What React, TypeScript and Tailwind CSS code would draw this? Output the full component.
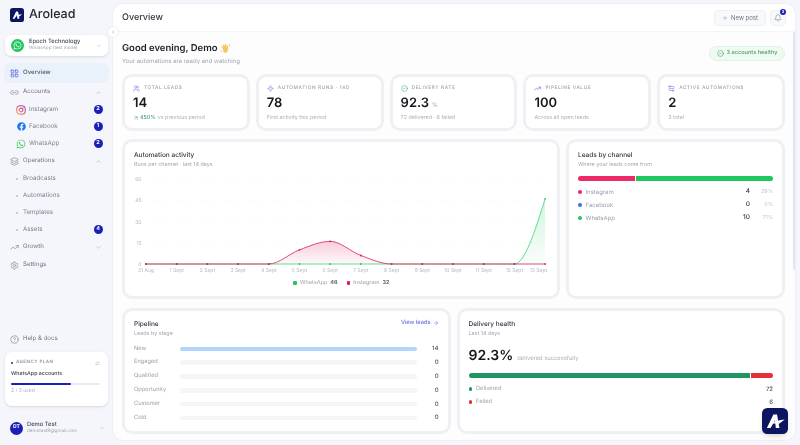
import {
  ArrowRight,
  ArrowRightLeft,
  ArrowUpRight,
  Bell,
  ChevronDown,
  ChevronLeft,
  ChevronUp,
  CircleCheck,
  CircleHelp,
  Layers,
  LayoutGrid,
  Link2,
  Plus,
  Route,
  Settings,
  Sparkle,
  TrendingUp,
  Users,
} from 'lucide-react';
import { FaFacebook, FaWhatsapp } from 'react-icons/fa';
import type { ReactNode } from 'react';

const days = ['31 Aug', '1 Sept', '2 Sept', '3 Sept', '4 Sept', '5 Sept', '6 Sept', '7 Sept', '8 Sept', '9 Sept', '10 Sept', '11 Sept', '12 Sept', '13 Sept'];
const instagram = [0, 0, 0, 0, 0, 10, 16, 6, 0, 0, 0, 0, 0, 0];
const whatsapp = [0, 0, 0, 0, 0, 0, 0, 0, 0, 0, 0, 0, 0, 46];

const stages = [
  { name: 'New', value: 14 },
  { name: 'Engaged', value: 0 },
  { name: 'Qualified', value: 0 },
  { name: 'Opportunity', value: 0 },
  { name: 'Customer', value: 0 },
  { name: 'Cold', value: 0 },
];

function Logo({ size }: { size: number }) {
  return (
    <svg width={size} height={size} viewBox="0 0 32 32" className="shrink-0">
      <rect width="32" height="32" rx="6.5" fill="#0b1560" />
      <path d="M6 24.5 L14 8 H18.5 L21.5 24.5 H17 L16 15.5 L10.5 24.5 Z" fill="#fff" />
      <path d="M10 19.5 C15 16.5 21 14.5 28 14 L21 19.5 C18 19 14 19 10 19.5 Z" fill="#fff" />
    </svg>
  );
}

function InstagramIcon() {
  return (
    <svg width="10" height="10" viewBox="0 0 24 24" fill="none" className="shrink-0">
      <defs>
        <linearGradient id="ig" x1="0" y1="1" x2="1" y2="0">
          <stop offset="0" stopColor="#f9a13a" />
          <stop offset="0.5" stopColor="#e1306c" />
          <stop offset="1" stopColor="#8a3ab9" />
        </linearGradient>
      </defs>
      <rect x="2" y="2" width="20" height="20" rx="6" stroke="url(#ig)" strokeWidth="2.4" />
      <circle cx="12" cy="12" r="4.6" stroke="url(#ig)" strokeWidth="2.4" />
      <circle cx="17.5" cy="6.5" r="1.4" fill="#c13584" />
    </svg>
  );
}

function Wave() {
  return (
    <svg width="11" height="11" viewBox="0 0 24 24" className="shrink-0">
      <path d="M6 12 L3.5 8.5 C3 7 5 6 6 7.2 L8 9.5 L6.5 5 C6 3.4 8.2 2.6 9 4 L11 8 L10.6 3.4 C10.6 1.8 13 1.6 13.3 3.2 L14.5 8.5 L15.4 6 C16 4.5 18.2 5 18 6.8 L17.5 13 C17.4 18 14.5 22 10.5 21.5 C7.5 21 6.8 16 6 12 Z" fill="#f7c65c" />
      <path d="M19.5 2.5 C21 3.5 22 5 22.3 6.8 M2 16 C2.4 18 3.4 19.6 5 20.6" stroke="#e8b04a" strokeWidth="1.3" fill="none" strokeLinecap="round" />
    </svg>
  );
}

function CountBadge({ n }: { n: number }) {
  return (
    <span className="ml-auto flex h-[9px] w-[9px] items-center justify-center rounded-full bg-[#1a1fb8] text-[5.5px] font-bold text-white">
      {n}
    </span>
  );
}

function NavGroup({ icon, label, chevron }: { icon: ReactNode; label: string; chevron?: 'up' | 'down' }) {
  return (
    <div className="flex h-[18px] items-center gap-[4px] pl-[6px] pr-[7px] text-[6.1px] text-[#6b7280]">
      <span className="flex w-[9px] justify-center text-[#8b93a1]">{icon}</span>
      <span>{label}</span>
      {chevron === 'up' && <ChevronUp className="ml-auto h-[7px] w-[7px] text-[#a8afba]" />}
      {chevron === 'down' && <ChevronDown className="ml-auto h-[7px] w-[7px] text-[#a8afba]" />}
    </div>
  );
}

function SubLink({ label, badge }: { label: string; badge?: number }) {
  return (
    <div className="flex h-[17px] items-center pl-[12px] pr-[6.5px] text-[6.2px] text-[#7b8390]">
      <span className="mr-[5px] h-[2px] w-[2px] rounded-full bg-[#b6bcc6]" />
      <span>{label}</span>
      {badge !== undefined && <CountBadge n={badge} />}
    </div>
  );
}

function AccountLink({ icon, label, badge }: { icon: ReactNode; label: string; badge: number }) {
  return (
    <div className="flex h-[17px] items-center gap-[3px] pl-[12px] pr-[6.5px] text-[6.2px] text-[#7b8390]">
      <span className="flex w-[10px] justify-center">{icon}</span>
      <span>{label}</span>
      <CountBadge n={badge} />
    </div>
  );
}

function Sidebar() {
  return (
    <aside className="flex h-full w-[113px] shrink-0 flex-col px-[5px] [will-change:transform]">
      <div className="mt-[7px] flex h-[16px] items-center gap-[5px] pl-[5px]">
        <Logo size={14} />
        <span className="text-[12.5px] font-medium text-[#23272f]">Arolead</span>
      </div>
      <div className="mt-[12px] flex h-[21px] items-center gap-[5px] rounded-[6px] bg-white pl-[6px] pr-[6px] shadow-sm">
        <span className="flex h-[13px] w-[13px] shrink-0 items-center justify-center rounded-full bg-[#22c55e] text-white">
          <FaWhatsapp className="h-[9px] w-[9px]" />
        </span>
        <div className="min-w-0 leading-none">
          <div className="text-[5.8px] font-medium text-[#3f4550]">Epoch Technology</div>
          <div className="mt-[2px] text-[4.6px] text-[#a0a6b1]">WhatsApp (test mode)</div>
        </div>
        <ChevronDown className="ml-auto h-[6px] w-[6px] text-[#b0b6c0]" />
      </div>
      <div className="-mx-[1px] mt-[7px] flex h-[20px] items-center gap-[4px] rounded-[6px] bg-[#e9f2fb] pl-[6px] text-[6.1px] font-medium text-[#4b5563]">
        <LayoutGrid className="h-[9px] w-[9px] text-[#5b63d6]" />
        Overview
      </div>
      <div className="-mx-[1px]">
        <NavGroup icon={<Link2 className="h-[9px] w-[9px]" />} label="Accounts" chevron="up" />
        <AccountLink icon={<InstagramIcon />} label="Instagram" badge={2} />
        <AccountLink icon={<FaFacebook className="h-[9px] w-[9px] text-[#1877f2]" />} label="Facebook" badge={1} />
        <AccountLink icon={<FaWhatsapp className="h-[10px] w-[10px] text-[#4cc766]" />} label="WhatsApp" badge={2} />
        <NavGroup icon={<Layers className="h-[9px] w-[9px]" />} label="Operations" chevron="up" />
        <SubLink label="Broadcasts" />
        <SubLink label="Automations" />
        <SubLink label="Templates" />
        <SubLink label="Assets" badge={4} />
        <NavGroup icon={<TrendingUp className="h-[9px] w-[9px]" />} label="Growth" chevron="down" />
        <NavGroup icon={<Settings className="h-[9px] w-[9px]" />} label="Settings" />
      </div>
      <div className="mt-auto">
        <div className="-mx-[1px]">
          <NavGroup icon={<CircleHelp className="h-[9px] w-[9px]" />} label="Help & docs" />
        </div>
        <div className="mt-[4px] h-[54px] rounded-[7px] bg-white pl-[6px] pr-[8px] pt-[8px] shadow-sm">
          <div className="flex items-center text-[4.5px] font-semibold tracking-[0.1em] text-[#8d94a1]">
            <span className="mr-[3px] h-[2px] w-[2px] rounded-full bg-[#1a1fb8]" />
            AGENCY PLAN
            <ArrowRightLeft className="ml-auto h-[5px] w-[5px] text-[#b0b6c0]" />
          </div>
          <div className="mt-[4px] text-[5.3px] font-medium text-[#3f4550]">WhatsApp accounts</div>
          <div className="mt-[4px] h-[2px] w-full rounded-full bg-[#e8eaf3]">
            <div className="h-full w-[67%] rounded-full bg-[#1a1fb8]" />
          </div>
          <div className="mt-[3px] text-[5px] text-[#aab0ba]">2 / 3 used</div>
        </div>
        <div className="mt-[5px] flex h-[34px] items-center gap-[4px] pl-[5px] pr-[3px]">
          <span className="flex h-[13px] w-[13px] items-center justify-center rounded-full bg-[#1a1fb8] text-[5px] font-bold text-white">
            DT
          </span>
          <div className="leading-none">
            <div className="text-[5.8px] font-medium text-[#3f4550]">Demo Test</div>
            <div className="mt-[2px] text-[4.6px] text-[#a0a6b1]">demotest8@gmail.com</div>
          </div>
          <ChevronDown className="ml-auto h-[6px] w-[6px] text-[#b0b6c0]" />
        </div>
      </div>
    </aside>
  );
}

function Card({ className, children }: { className?: string; children: ReactNode }) {
  return <div className={`rounded-[10px] border-[3px] border-[#eef0f3] bg-white ${className ?? ''}`}>{children}</div>;
}

function CardTitle({ title, sub }: { title: string; sub: string }) {
  return (
    <div>
      <div className="text-[6.5px] font-medium leading-[10px] text-[#30353e]">{title}</div>
      <div className="mt-[1px] text-[5.4px] leading-[9px] text-[#a0a6b1]">{sub}</div>
    </div>
  );
}

function Stat({ icon, label, value, unit, sub }: { icon: ReactNode; label: string; value: string; unit?: string; sub: ReactNode }) {
  return (
    <Card className="h-[57px] px-[8px] pt-[8px]">
      <div className="flex h-[7px] items-center gap-[4px] text-[4.8px] font-medium tracking-[0.12em] text-[#9aa1ad]">
        {icon}
        <span className="whitespace-nowrap">{label}</span>
      </div>
      <div className="mt-[3px] flex h-[16px] items-baseline text-[13px] font-semibold leading-[16px] text-[#14171c]">
        {value}
        {unit && <span className="ml-[3px] text-[6px] font-normal text-[#a0a6b1]">{unit}</span>}
      </div>
      <div className="mt-[3px] text-[5.4px] text-[#aab0ba]">{sub}</div>
    </Card>
  );
}

// same shape as d3's curveMonotoneX, which the reference chart looks drawn with
function monotonePath(points: [number, number][]) {
  const n = points.length;
  const tangent: number[] = new Array(n).fill(0);
  const slope = (a: [number, number], b: [number, number]) => (b[1] - a[1]) / (b[0] - a[0]);
  for (let i = 1; i < n - 1; i++) {
    const s0 = slope(points[i - 1], points[i]);
    const s1 = slope(points[i], points[i + 1]);
    tangent[i] = (Math.sign(s0) + Math.sign(s1)) * Math.min(Math.abs(s0), Math.abs(s1), 0.25 * Math.abs(s0 + s1));
  }
  tangent[0] = (3 * slope(points[0], points[1]) - tangent[1]) / 2;
  tangent[n - 1] = (3 * slope(points[n - 2], points[n - 1]) - tangent[n - 2]) / 2;
  let d = `M${points[0][0]} ${points[0][1]}`;
  for (let i = 1; i < n; i++) {
    const dx = (points[i][0] - points[i - 1][0]) / 3;
    d += ` C${points[i - 1][0] + dx} ${points[i - 1][1] + dx * tangent[i - 1]} ${points[i][0] - dx} ${points[i][1] - dx * tangent[i]} ${points[i][0]} ${points[i][1]}`;
  }
  return d;
}

function ActivityChart() {
  const left = 12;
  const step = 30.7;
  const zero = 92;
  const X = (i: number) => left + i * step;
  const Y = (v: number) => zero - (v * 85) / 60;

  const curve = (vals: number[]) => monotonePath(vals.map((v, i) => [X(i), Y(v)]));
  const area = (vals: number[]) => `${curve(vals)} L${X(13)} ${zero} L${X(0)} ${zero} Z`;

  return (
    <svg width={423} height={104} className="mt-[2px] block">
      <defs>
        <linearGradient id="pinkFill" x1="0" y1="0" x2="0" y2="1">
          <stop offset="0" stopColor="#e11d5c" stopOpacity="0.22" />
          <stop offset="1" stopColor="#e11d5c" stopOpacity="0.03" />
        </linearGradient>
        <linearGradient id="greenFill" x1="0" y1="0" x2="0" y2="1">
          <stop offset="0" stopColor="#22c55e" stopOpacity="0.2" />
          <stop offset="1" stopColor="#22c55e" stopOpacity="0.02" />
        </linearGradient>
      </defs>
      {[60, 45, 30, 15].map((v) => (
        <line key={v} x1={left} x2={X(13)} y1={Y(v)} y2={Y(v)} stroke="#f5f6f8" strokeWidth="0.6" strokeDasharray="3 3" />
      ))}
      {[60, 45, 30, 15, 0].map((v) => (
        <text key={v} x={left - 4.5} y={Y(v) + 2} textAnchor="end" fontSize="5" fill="#b2b8c1">
          {v}
        </text>
      ))}
      {days.map((d, i) => (
        <text key={d} x={i === 13 ? X(i) + 2 : X(i)} y={zero + 8} textAnchor={i === 13 ? 'end' : 'middle'} fontSize="5" fill="#b2b8c1">
          {d}
        </text>
      ))}
      <path d={area(whatsapp)} fill="url(#greenFill)" />
      <path d={area(instagram)} fill="url(#pinkFill)" />
      <path d={curve(whatsapp)} fill="none" stroke="#4ade80" strokeWidth="0.9" />
      <path d={curve(instagram)} fill="none" stroke="#e0356f" strokeWidth="0.9" />
      {whatsapp.map((v, i) => (
        <circle key={i} cx={X(i)} cy={Y(v)} r="0.9" fill="#22c55e" />
      ))}
      {instagram.map((v, i) => (
        <circle key={i} cx={X(i)} cy={Y(v)} r="0.9" fill="#d81b60" />
      ))}
    </svg>
  );
}

function ChannelRow({ dot, name, count, pct }: { dot: string; name: string; count: number; pct: string }) {
  return (
    <div className="flex h-[13px] items-center text-[6px] text-[#9aa1ad]">
      <span className={`mr-[4px] h-[3.5px] w-[3.5px] rounded-full ${dot}`} />
      {name}
      <span className="ml-auto text-[6.5px] font-medium text-[#30353e]">{count}</span>
      <span className="w-[23px] text-right text-[5.4px] text-[#c0c5cd]">{pct}</span>
    </div>
  );
}

function App() {
  return (
    <div className="flex h-[445px] w-[800px] overflow-hidden bg-[#f4f6fb] font-['Inter',sans-serif] antialiased [text-rendering:geometricPrecision]">
      <Sidebar />
      <main className="relative mb-[5px] mr-[5px] mt-[4px] flex min-w-0 flex-1 flex-col rounded-[10px] bg-[#fdfdfe] shadow-[0_0_0_1px_#eef0f4] [will-change:transform]">
        <button className="absolute -left-[5px] top-[23px] z-10 flex h-[10px] w-[10px] items-center justify-center rounded-full bg-white text-[#9aa1ad] shadow-[0_0_2px_#d5d8de]">
          <ChevronLeft className="h-[6px] w-[6px]" />
        </button>
        <span className="absolute right-0 top-[28px] h-[238px] w-[2px] rounded-full bg-[#dfe4fa]" />
        <header className="flex h-[28px] shrink-0 items-center rounded-t-[10px] border-b border-[#f4f5f8] bg-white pl-[9px] pr-[9px]">
          <h1 className="text-[9px] font-medium text-[#30353e]">Overview</h1>
          <button className="ml-auto flex h-[16px] w-[52px] items-center justify-center gap-[3px] rounded-[4px] border border-[#f0f1f4] bg-[#f8f9fb] text-[6px] text-[#6b7280]">
            <Plus className="h-[6px] w-[6px] text-[#9aa1ad]" />
            New post
          </button>
          <button className="relative ml-[4px] flex h-[16px] w-[16px] items-center justify-center rounded-[4px] border border-[#f0f1f4] bg-[#f8f9fb] text-[#8b93a1]">
            <Bell className="h-[8px] w-[8px]" />
            <span className="absolute -right-[1px] -top-[2px] flex h-[6px] w-[6px] items-center justify-center rounded-full bg-[#1a1fb8] text-[4px] font-bold text-white">
              3
            </span>
          </button>
        </header>
        <div className="flex flex-1 flex-col pl-[9px] pr-[10px]">
          <div className="flex h-[42px] items-center">
            <div className="pt-[1px]">
              <div className="flex items-center gap-[2px] text-[9.5px] font-semibold leading-[14px] text-[#191c22]">
                Good evening, Demo <Wave />
              </div>
              <div className="mt-[1px] text-[6px] text-[#a0a6b1]">Your automations are ready and watching</div>
            </div>
            <div className="ml-auto flex h-[15px] w-[76px] items-center justify-center gap-[3px] rounded-full border border-[#e0f3e6] bg-[#eefaf2] text-[5.6px] font-medium text-[#4f9e6c]">
              <CircleCheck className="h-[7px] w-[7px]" />
              3 accounts healthy
            </div>
          </div>
          <div className="grid grid-cols-5 gap-[6px]">
            <Stat
              icon={<Users className="h-[7px] w-[7px] text-[#7c7fe0]" />}
              label="TOTAL LEADS"
              value="14"
              sub={
                <span className="flex items-center">
                  <ArrowUpRight className="mr-[1px] h-[6px] w-[6px] text-[#4f9e6c]" />
                  <span className="mr-[2px] font-medium text-[#4f9e6c]">450%</span> vs previous period
                </span>
              }
            />
            <Stat icon={<Sparkle className="h-[7px] w-[7px] text-[#7c7fe0]" />} label="AUTOMATION RUNS · 14D" value="78" sub="First activity this period" />
            <Stat icon={<CircleCheck className="h-[7px] w-[7px] text-[#4fb37a]" />} label="DELIVERY RATE" value="92.3" unit="%" sub="72 delivered · 6 failed" />
            <Stat icon={<TrendingUp className="h-[7px] w-[7px] text-[#5b63d6]" />} label="PIPELINE VALUE" value="100" sub="Across all open leads" />
            <Stat icon={<Route className="h-[7px] w-[7px] -scale-x-100 text-[#7c7fe0]" />} label="ACTIVE AUTOMATIONS" value="2" sub="3 total" />
          </div>
          <div className="mt-[8px] grid h-[160px] grid-cols-[438px_1fr] gap-[6px]">
            <Card className="pl-[9px] pt-[8px]">
              <CardTitle title="Automation activity" sub="Runs per channel · last 14 days" />
              <ActivityChart />
              <div className="mt-[3px] flex items-center justify-center gap-[9px] pr-[8px] text-[5.6px] text-[#9aa1ad]">
                <span className="flex items-center gap-[3px]">
                  <span className="h-[3.5px] w-[3.5px] rounded-[1px] bg-[#22c55e]" />
                  WhatsApp <b className="font-semibold text-[#4b5563]">46</b>
                </span>
                <span className="flex items-center gap-[3px]">
                  <span className="h-[3.5px] w-[3.5px] rounded-[1px] bg-[#e11d5c]" />
                  Instagram <b className="font-semibold text-[#4b5563]">32</b>
                </span>
              </div>
            </Card>
            <Card className="px-[9px] pt-[8px]">
              <CardTitle title="Leads by channel" sub="Where your leads come from" />
              <div className="mb-[5px] mt-[6px] flex h-[4.5px] gap-[1px]">
                <div className="w-[29%] rounded-l-full bg-[#ec2a68]" />
                <div className="flex-1 rounded-r-full bg-[#22c55e]" />
              </div>
              <ChannelRow dot="bg-[#ec2a68]" name="Instagram" count={4} pct="29%" />
              <ChannelRow dot="bg-[#3b6fe8]" name="Facebook" count={0} pct="0%" />
              <ChannelRow dot="bg-[#22c55e]" name="WhatsApp" count={10} pct="71%" />
            </Card>
          </div>
          <div className="mt-[9px] grid h-[126px] grid-cols-2 gap-[6px]">
            <Card className="px-[9px] pt-[8px]">
              <div className="flex items-start justify-between">
                <CardTitle title="Pipeline" sub="Leads by stage" />
                <span className="flex items-center gap-[2px] text-[5.7px] font-medium text-[#6a6ed8]">
                  View leads <ArrowRight className="h-[6px] w-[6px]" />
                </span>
              </div>
              <div className="mt-[3px]">
                {stages.map((s) => (
                  <div key={s.name} className="flex h-[13.8px] items-center text-[5.7px] text-[#9aa1ad]">
                    <span className="w-[46px]">{s.name}</span>
                    <div className="h-[4.5px] w-[237px] rounded-full bg-[#f3f5f7]">
                      {s.value > 0 && <div className="h-full w-full rounded-full bg-[#b3d4fb]" />}
                    </div>
                    <span className="ml-auto text-[6px] font-medium text-[#4b5563]">{s.value}</span>
                  </div>
                ))}
              </div>
            </Card>
            <Card className="relative px-[9px] pt-[8px]">
              <CardTitle title="Delivery health" sub="Last 14 days" />
              <div className="mt-[8px] flex items-baseline gap-[4px]">
                <span className="text-[14px] font-semibold leading-[18px] text-[#14171c]">92.3%</span>
                <span className="text-[5.8px] text-[#aab0ba]">delivered successfully</span>
              </div>
              <div className="mb-[5px] mt-[8px] flex h-[4.5px] gap-[1px]">
                <div className="w-[92.3%] rounded-l-full bg-[#1f9561]" />
                <div className="flex-1 rounded-r-full bg-[#e5303a]" />
              </div>
              <div className="flex h-[13px] items-center text-[5.7px] text-[#9aa1ad]">
                <span className="mr-[4px] h-[3.5px] w-[3.5px] rounded-full bg-[#1f9561]" />
                Delivered
                <span className="ml-auto text-[6px] font-medium text-[#4b5563]">72</span>
              </div>
              <div className="flex h-[13px] items-center text-[5.7px] text-[#9aa1ad]">
                <span className="mr-[4px] h-[3.5px] w-[3.5px] rounded-full bg-[#e5303a]" />
                Failed
                <span className="ml-auto text-[6px] font-medium text-[#4b5563]">6</span>
              </div>
              <span className="absolute -bottom-[3px] -right-[6px] rounded-[7px] shadow-md">
                <Logo size={26} />
              </span>
            </Card>
          </div>
        </div>
      </main>
    </div>
  );
}

export default App;
